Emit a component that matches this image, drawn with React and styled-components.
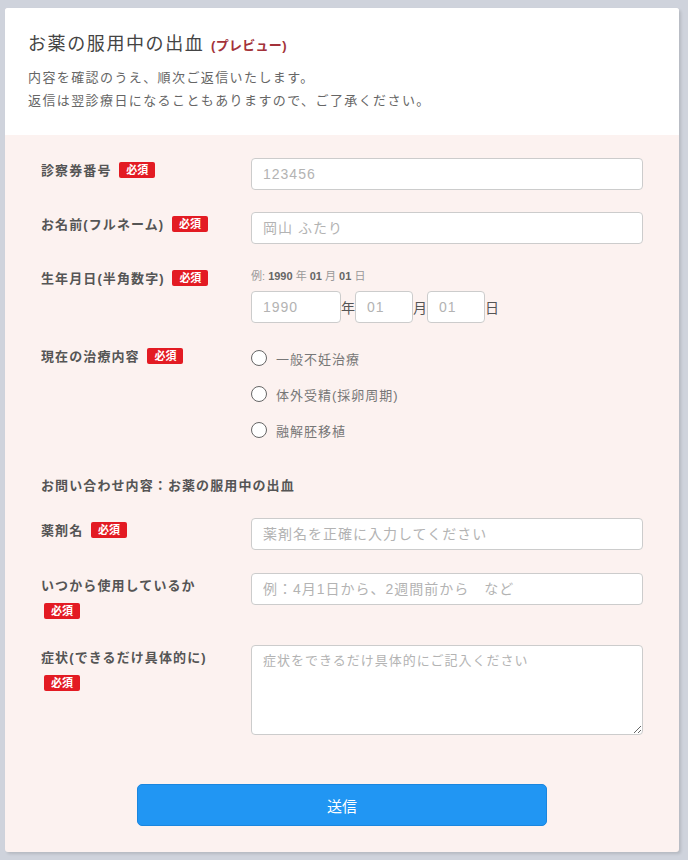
import React from 'react'
import styled, { createGlobalStyle } from 'styled-components'

const GlobalStyle = createGlobalStyle`
  body {
    margin: 0;
    background: #cfd3dc;
    font-family: "Liberation Sans", "Noto Sans CJK JP", sans-serif;
    letter-spacing: 1px;
  }
  * { box-sizing: border-box; }
`

const Card = styled.div`
  width: 674px;
  margin: 8px 0 8px 5px;
  background: #fcf2f0;
  border-radius: 3px;
  overflow: hidden;
  box-shadow: 2px 2px 3px rgba(0, 0, 0, 0.12);
`

const Header = styled.header`
  background: #fff;
  padding: 22px 23px 23px;
`

const Title = styled.h1`
  margin: 0;
  font-size: 18px;
  line-height: 28px;
  font-weight: normal;
  letter-spacing: 1.6px;
  color: #444;
`

const Preview = styled.span`
  font-size: 13px;
  font-weight: bold;
  color: #a3323a;
  letter-spacing: 0.3px;
`

const Lead = styled.p`
  margin: 6px 0 0;
  font-size: 13px;
  line-height: 23px;
  letter-spacing: 1.4px;
  color: #666;
`

const Form = styled.form`
  padding: 23px 36px 26px;
`

const Row = styled.div`
  display: grid;
  grid-template-columns: 190px 392px;
  column-gap: 20px;
  align-items: start;
  margin-bottom: ${p => p.$gap || 22}px;
`

const Label = styled.div`
  font-size: 13px;
  line-height: 26px;
  font-weight: bold;
  letter-spacing: 1.1px;
  color: #555;
`

const Badge = styled.span`
  display: inline-block;
  margin-left: 3px;
  padding: 0 7px;
  height: 16px;
  line-height: 16px;
  font-size: 11px;
  font-weight: bold;
  letter-spacing: 0;
  color: #fff;
  background: #e31b23;
  border-radius: 2px;
  vertical-align: 1px;
`

const Input = styled.input`
  display: block;
  width: ${p => p.$w || '100%'};
  height: 32px;
  padding: 0 11px;
  border: 1px solid #ccc;
  border-radius: 4px;
  background: #fff;
  font-family: inherit;
  font-size: 14px;
  letter-spacing: 1px;
  color: #444;
  &::placeholder { color: #b3b3b3; }
`

const TextArea = styled.textarea`
  display: block;
  width: 100%;
  height: 90px;
  padding: 6px 11px;
  border: 1px solid #ccc;
  border-radius: 4px;
  background: #fff;
  font-family: inherit;
  font-size: 13px;
  line-height: 18px;
  letter-spacing: 1px;
  color: #444;
  &::placeholder { color: #b3b3b3; }
`

const Example = styled.div`
  font-size: 11px;
  line-height: 20px;
  color: #999;
  letter-spacing: 0;
  margin-bottom: 5px;
  b { color: #666; }
`

const DateLine = styled.div`
  display: flex;
  align-items: center;
  font-size: 14px;
  color: #555;
  letter-spacing: 0;
`

const RadioList = styled.div`
  display: flex;
  flex-direction: column;
  gap: 8px;
`

const Option = styled.label`
  display: flex;
  align-items: center;
  height: 28px;
  font-size: 13px;
  color: #777;
`

const Circle = styled.span`
  width: 16px;
  height: 16px;
  margin-right: 9px;
  border: 1.5px solid #666;
  border-radius: 50%;
  background: #fff;
`

const Section = styled.div`
  margin: 32px 0 22px;
  font-size: 13px;
  line-height: 20px;
  font-weight: bold;
  letter-spacing: 1.1px;
  color: #555;
`

const Submit = styled.button`
  display: block;
  width: 410px;
  height: 42px;
  margin: 49px auto 0;
  border: 1px solid #1a86df;
  border-radius: 5px;
  background: #2196f3;
  color: #fff;
  font-family: inherit;
  font-size: 15px;
  letter-spacing: 0;
`

const Req = () => <Badge>必須</Badge>

export default function App() {
  return (
    <>
      <GlobalStyle />
      <Card>
        <Header>
          <Title>
            お薬の服用中の出血 <Preview>(プレビュー)</Preview>
          </Title>
          <Lead>
            内容を確認のうえ、順次ご返信いたします。
            <br />
            返信は翌診療日になることもありますので、ご了承ください。
          </Lead>
        </Header>
        <Form onSubmit={e => e.preventDefault()}>
          <Row>
            <Label>診察券番号 <Req /></Label>
            <Input placeholder="123456" />
          </Row>
          <Row>
            <Label>お名前(フルネーム) <Req /></Label>
            <Input placeholder="岡山 ふたり" />
          </Row>
          <Row $gap={21}>
            <Label>生年月日(半角数字) <Req /></Label>
            <div>
              <Example>
                例: <b>1990</b> 年 <b>01</b> 月 <b>01</b> 日
              </Example>
              <DateLine>
                <Input $w="90px" placeholder="1990" />
                年
                <Input $w="58px" placeholder="01" />
                月
                <Input $w="58px" placeholder="01" />
                日
              </DateLine>
            </div>
          </Row>
          <Row $gap={0}>
            <Label>現在の治療内容 <Req /></Label>
            <RadioList>
              {['一般不妊治療', '体外受精(採卵周期)', '融解胚移植'].map(t => (
                <Option key={t}>
                  <Circle />
                  {t}
                </Option>
              ))}
            </RadioList>
          </Row>
          <Section>お問い合わせ内容：お薬の服用中の出血</Section>
          <Row $gap={23}>
            <Label>薬剤名 <Req /></Label>
            <Input placeholder="薬剤名を正確に入力してください" />
          </Row>
          <Row $gap={20}>
            <Label>いつから使用しているか <Req /></Label>
            <Input placeholder="例：4月1日から、2週間前から　など" />
          </Row>
          <Row $gap={0}>
            <Label>症状(できるだけ具体的に) <Req /></Label>
            <TextArea placeholder="症状をできるだけ具体的にご記入ください" />
          </Row>
          <Submit type="submit">送信</Submit>
        </Form>
      </Card>
    </>
  )
}
